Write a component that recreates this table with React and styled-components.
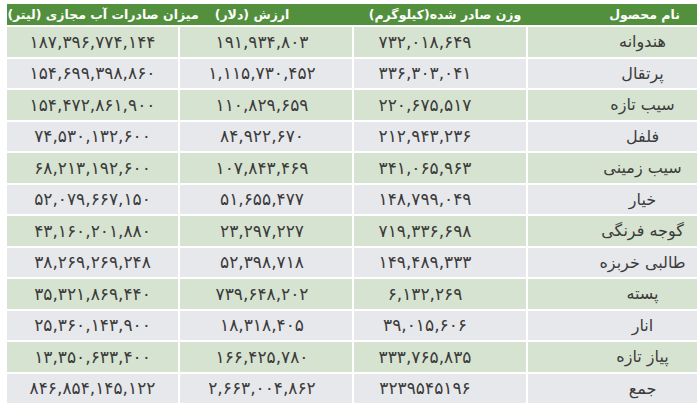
import React from "react";
import styled, { createGlobalStyle } from "styled-components";

const Global = createGlobalStyle`
  html, body {
    margin: 0;
    padding: 0;
    background: #ffffff;
  }
`;

const Page = styled.div`
  width: 700px;
  height: 409px;
  box-sizing: border-box;
  padding: 4px 3px 0 7px;
  background: #fff;
  font-family: "DejaVu Sans", "Noto Sans", sans-serif;
`;

const Table = styled.div`
  direction: rtl;
  display: grid;
  row-gap: 2px;
`;

const cols = "169px 172px 172px 171px";

const HeadRow = styled.div`
  display: grid;
  grid-template-columns: ${cols};
  column-gap: 2px;
  height: 21px;
  background: #52903d;
`;

const HeadCell = styled.div`
  display: flex;
  align-items: center;
  justify-content: center;
  padding-left: ${p => p.$padL || 0}px;
  padding-right: ${p => p.$padR || 0}px;
  color: #fff;
  font-size: 12.5px;
  font-weight: bold;
  white-space: nowrap;
`;

const Row = styled.div`
  display: grid;
  grid-template-columns: ${cols};
  column-gap: 2px;
  height: 29.5px;
`;

const Cell = styled.div`
  display: flex;
  align-items: center;
  justify-content: center;
  background: ${p => (p.$green ? "#d6e3d0" : "#e7e8ec")};
  color: #3b3b3b;
  font-size: ${p => (p.$num ? 17 : 16)}px;
  padding-left: ${p => p.$padL || 0}px;
  padding-right: ${p => p.$padR || 0}px;
  white-space: nowrap;
`;

const rows = [
  ["هندوانه", "۷۳۲,۰۱۸,۶۴۹", "۱۹۱,۹۳۴,۸۰۳", "۱۸۷,۳۹۶,۷۷۴,۱۴۴"],
  ["پرتقال", "۳۳۶,۳۰۳,۰۴۱", "۱,۱۱۵,۷۳۰,۴۵۲", "۱۵۴,۶۹۹,۳۹۸,۸۶۰"],
  ["سیب تازه", "۲۲۰,۶۷۵,۵۱۷", "۱۱۰,۸۲۹,۶۵۹", "۱۵۴,۴۷۲,۸۶۱,۹۰۰"],
  ["فلفل", "۲۱۲,۹۴۳,۲۳۶", "۸۴,۹۲۲,۶۷۰", "۷۴,۵۳۰,۱۳۲,۶۰۰"],
  ["سیب زمینی", "۳۴۱,۰۶۵,۹۶۳", "۱۰۷,۸۴۳,۴۶۹", "۶۸,۲۱۳,۱۹۲,۶۰۰"],
  ["خیار", "۱۴۸,۷۹۹,۰۴۹", "۵۱,۶۵۵,۴۷۷", "۵۲,۰۷۹,۶۶۷,۱۵۰"],
  ["گوجه فرنگی", "۷۱۹,۳۳۶,۶۹۸", "۲۳,۲۹۷,۲۲۷", "۴۳,۱۶۰,۲۰۱,۸۸۰"],
  ["طالبی خربزه", "۱۴۹,۴۸۹,۳۳۳", "۵۲,۳۹۸,۷۱۸", "۳۸,۲۶۹,۲۶۹,۲۴۸"],
  ["پسته", "۶,۱۳۲,۲۶۹", "۷۳۹,۶۴۸,۲۰۲", "۳۵,۳۲۱,۸۶۹,۴۴۰"],
  ["انار", "۳۹,۰۱۵,۶۰۶", "۱۸,۳۱۸,۴۰۵", "۲۵,۳۶۰,۱۴۳,۹۰۰"],
  ["پیاز تازه", "۳۳۳,۷۶۵,۸۳۵", "۱۶۶,۴۲۵,۷۸۰", "۱۳,۳۵۰,۶۳۳,۴۰۰"],
  ["جمع", "۳۲۳۹۵۴۵۱۹۶", "۲,۶۶۳,۰۰۴,۸۶۲", "۸۴۶,۸۵۴,۱۴۵,۱۲۲"],
];

export default function App() {
  return (
    <Page>
      <Global />
      <Table>
        <HeadRow>
          <HeadCell $padL={64}>نام محصول</HeadCell>
          <HeadCell $padL={10}>وزن صادر شده(کیلوگرم)</HeadCell>
          <HeadCell $padR={28}>ارزش (دلار)</HeadCell>
          <HeadCell $padL={21}>میزان صادرات آب مجازی (لیتر)</HeadCell>
        </HeadRow>
        {rows.map((r, i) => (
          <Row key={r[0]}>
            <Cell $green={i % 2 === 0} $padL={60}>
              {r[0]}
            </Cell>
            <Cell $green={i % 2 === 0} $num $padR={30}>
              {r[1]}
            </Cell>
            <Cell $green={i % 2 === 0} $num $padR={8}>
              {r[2]}
            </Cell>
            <Cell $green={i % 2 === 0} $num>
              {r[3]}
            </Cell>
          </Row>
        ))}
      </Table>
    </Page>
  );
}
